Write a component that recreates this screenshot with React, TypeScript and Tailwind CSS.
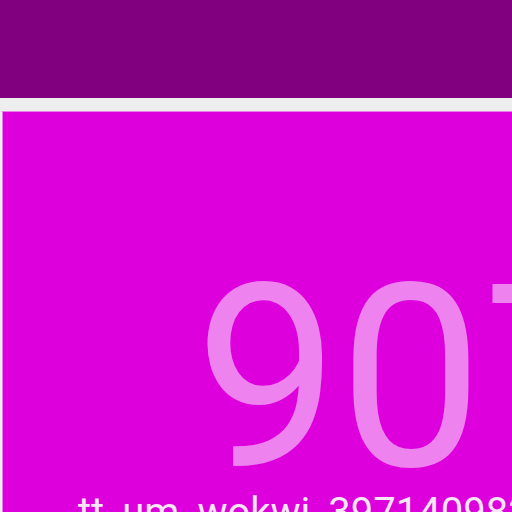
import React from 'react';

const App: React.FC = () => {
  return (
    <div className="w-[512px] h-[512px] overflow-hidden bg-[#eeeeee]" style={{ fontFamily: 'Roboto, "Liberation Sans", sans-serif' }}>
      <header className="h-[98px] bg-[#800080]" />
      <main className="mt-[13px] ml-[2px] h-[500px] bg-[#dd00dd] border-l border-t border-[#e87ee8] overflow-hidden">
        <div className="pt-[162px]">
          <div className="pl-[192px] text-[256px] leading-[210px] text-[#ee82ee] whitespace-nowrap">
            907
          </div>
          <div className="mt-[9px] pl-[75px] text-[40px] leading-none text-[#f6e6f6] whitespace-nowrap">
            tt_um_wokwi_397140982388012033
          </div>
        </div>
      </main>
    </div>
  );
};

export default App;
